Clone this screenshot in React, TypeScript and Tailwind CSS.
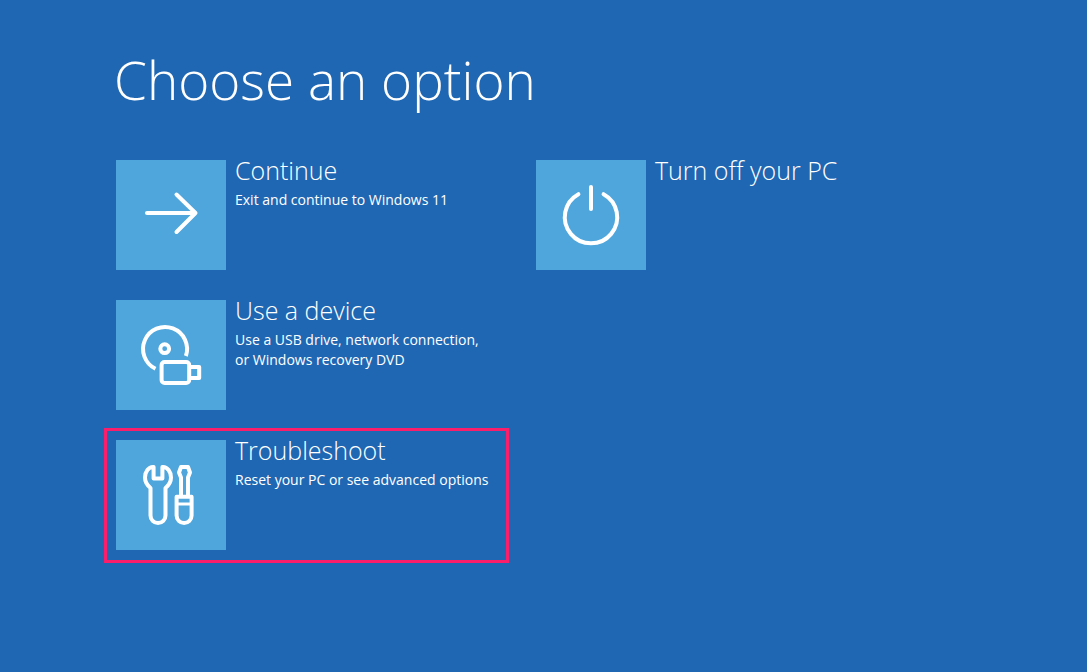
import type { ReactNode } from "react";
import clsx from "clsx";

type Option = {
  id: string;
  title: string;
  description?: string;
  icon: ReactNode;
  highlighted?: boolean;
};

function TileIcon({ children }: { children: ReactNode }) {
  return (
    <svg
      viewBox="0 0 110 110"
      className="size-full"
      fill="none"
      stroke="currentColor"
      strokeWidth="4"
      aria-hidden="true"
    >
      {children}
    </svg>
  );
}

const arrowIcon = (
  <TileIcon>
    <path d="M31 53H79.5M60.5 34.5L79.5 53L60.5 72" strokeLinecap="round" strokeLinejoin="round" />
  </TileIcon>
);

const powerIcon = (
  <TileIcon>
    <path d="M55 27V49" strokeLinecap="round" />
    <path d="M42.4 34.2A26.2 26.2 0 1 0 67.6 34.2" strokeLinecap="round" />
  </TileIcon>
);

const deviceIcon = (
  <TileIcon>
    <path d="M39.5 68.8A22 22 0 1 1 69.9 56" />
    <circle cx="48.7" cy="48.7" r="4.4" />
    <rect x="45.6" y="62" width="27.6" height="21" rx="3" />
    <path d="M73.2 67H83.2V78H73.2" strokeLinejoin="round" />
  </TileIcon>
);

const toolsIcon = (
  <TileIcon>
    <path
      d="M37.6 27V38.4H46.4V27C51.5 26.6 55 32 55 37.5C55 42 52.5 45.5 49.5 48V75.5A7.5 7.5 0 0 1 34.5 75.5V48C31.5 45.5 29 42 29 37.5C29 32 32.5 26.6 37.6 27Z"
      strokeLinejoin="round"
    />
    <path d="M65 56V37.5L63 32.5L65 27H72L74 32.5L72 37.5V56" strokeLinejoin="round" />
    <path d="M60.6 56.8H75.6V75.5A7.5 7.5 0 0 1 60.6 75.5Z" strokeLinejoin="round" />
    <path d="M60.6 64H75.6" strokeWidth="3" />
  </TileIcon>
);

const mainOptions: Option[] = [
  {
    id: "continue",
    title: "Continue",
    description: "Exit and continue to Windows 11",
    icon: arrowIcon
  },
  {
    id: "device",
    title: "Use a device",
    description: "Use a USB drive, network connection, or Windows recovery DVD",
    icon: deviceIcon
  },
  {
    id: "troubleshoot",
    title: "Troubleshoot",
    description: "Reset your PC or see advanced options",
    icon: toolsIcon,
    highlighted: true
  }
];

const powerOptions: Option[] = [{ id: "power", title: "Turn off your PC", icon: powerIcon }];

function OptionButton({ option }: { option: Option }) {
  return (
    <button
      type="button"
      className={clsx(
        "flex w-full cursor-pointer items-start gap-[9px] border-[3px] px-[9px] pt-[9px] pb-[10px] text-left",
        option.highlighted ? "border-[#fb1e6b]" : "border-transparent"
      )}
    >
      <span className="size-[110px] shrink-0 bg-[#4ea6dd]">{option.icon}</span>
      <span className="flex flex-col gap-[10px]">
        <span className="text-[25px] leading-[20px] font-light whitespace-nowrap">
          {option.title}
        </span>
        {option.description && (
          <span className="max-w-[254px] text-[14px] leading-[20px]">{option.description}</span>
        )}
      </span>
    </button>
  );
}

function OptionList({ options }: { options: Option[] }) {
  return (
    <ul className="flex flex-col gap-[5px]">
      {options.map((option) => (
        <li key={option.id}>
          <OptionButton option={option} />
        </li>
      ))}
    </ul>
  );
}

export default function App() {
  return (
    <main className="min-h-screen bg-[#1f67b3] px-[104px] pt-10 pb-16 font-['Open_Sans','Noto_Sans',sans-serif] text-white">
      <h1 className="pl-[10px] text-[53px] leading-[80px] font-light">Choose an option</h1>
      <div className="mt-7 grid max-w-[825px] grid-cols-2 gap-x-[15px]">
        <OptionList options={mainOptions} />
        <OptionList options={powerOptions} />
      </div>
    </main>
  );
}
